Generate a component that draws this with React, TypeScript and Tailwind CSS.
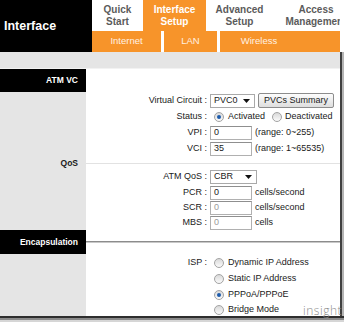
import React from "react";

const Radio = ({ on }: { on?: boolean }) => (
  <span className="flex h-[10px] w-[10px] shrink-0 items-center justify-center rounded-full border border-[#a3a3a3] bg-linear-to-b from-[#d9d9d9] to-[#fbfbfb]">
    {on && <span className="h-[4px] w-[4px] rounded-full bg-[#1d5bab]" />}
  </span>
);

const Arrow = () => (
  <svg width="7" height="4" viewBox="0 0 7 4">
    <path d="M0 0h7L3.5 4z" fill="#111" />
  </svg>
);

const Select = ({ value, w }: { value: string; w: string }) => (
  <div className={`flex h-[14px] items-center justify-between border border-[#a9a9a9] bg-white pl-[3px] pr-[4px] ${w}`}>
    <span>{value}</span>
    <Arrow />
  </div>
);

const Input = ({ value, dim }: { value: string; dim?: boolean }) => (
  <div className={`flex h-[14px] w-[42px] shrink-0 items-center border border-[#b0b0b0] border-t-[#8f8f8f] bg-white pl-[3px] ${dim ? "text-[#9a9a9a]" : ""}`}>
    {value}
  </div>
);

const Row = ({ label, h, children }: { label: string; h: string; children: React.ReactNode }) => (
  <div className={`grid grid-cols-[121px_1fr] items-center gap-x-[3px] ${h}`}>
    <span className="text-right">{label}</span>
    <div className="flex items-center whitespace-nowrap">{children}</div>
  </div>
);

const Tab = ({ top, bottom, w, active }: { top: string; bottom: string; w: string; active?: boolean }) => (
  <div
    className={`flex shrink-0 flex-col items-center justify-center whitespace-nowrap text-[10px] font-bold leading-[12px] ${w} ${
      active ? "bg-[#f7942a] text-white" : "bg-white text-[#5b5b5b]"
    }`}
  >
    <span>{top}</span>
    <span>{bottom}</span>
  </div>
);

const Choice = ({ on, label }: { on?: boolean; label: string }) => (
  <span className="ml-[4px] flex items-center gap-[4px]">
    <Radio on={on} />
    <span>{label}</span>
  </span>
);

export default function App() {
  return (
    <div className="relative flex h-[322px] w-[344px] flex-col overflow-hidden bg-white font-['Liberation_Sans',Arial,sans-serif] text-[9px] text-[#1a1a1a]">
      {/* header */}
      <div className="flex h-[52px] w-[340px] shrink-0">
        <div className="flex w-[92px] items-center bg-black pl-[4px] text-[12.5px] font-bold text-white">Interface</div>
        <div className="flex w-[248px] flex-col overflow-hidden">
          <div className="flex h-[31px]">
            <Tab top="Quick" bottom="Start" w="w-[51px]" />
            <Tab top="Interface" bottom="Setup" w="w-[63px]" active />
            <Tab top="Advanced" bottom="Setup" w="w-[67px]" />
            <Tab top="Access" bottom="Management" w="w-[86px]" />
          </div>
          <div className="flex h-[21px] items-stretch bg-[#f7942a] text-[9.5px] text-[#fff1e2]">
            <span className="flex w-[69px] items-center justify-center">Internet</span>
            <span className="w-[3px] bg-white" />
            <span className="flex w-[53px] items-center justify-center">LAN</span>
            <span className="w-[3px] bg-white" />
            <span className="flex w-[78px] items-center justify-center">Wireless</span>
          </div>
        </div>
      </div>

      {/* body */}
      <div className="flex h-[264px] shrink-0">
        <div className="flex w-[340px] flex-col overflow-hidden">
          <div className="h-[17px] shrink-0 border-b border-[#f2f2f2] bg-[#e5e5e5]" />

          <div className="grid grid-cols-[86px_1fr] text-[8.5px] font-bold">
            <div className="flex h-[23px] items-center justify-end bg-black pr-[8px] text-white">ATM VC</div>
            <div />
          </div>

          <div className="grid h-[65px] shrink-0 grid-cols-[86px_1fr]">
            <div className="bg-[#e5e5e5]" />
            <div className="flex flex-col">
              <Row label="Virtual Circuit :" h="h-[17px]">
                <Select value="PVC0" w="w-[45px]" />
                <button className="ml-[3px] flex h-[15px] w-[76px] items-center justify-center rounded-[2px] border border-[#8c8c8c] bg-linear-to-b from-[#fdfdfd] to-[#dedede] text-[9px] text-[#1a1a1a]">
                  PVCs Summary
                </button>
              </Row>
              <Row label="Status :" h="h-[16px]">
                <span className="ml-[4px] flex items-center gap-[4px]">
                  <Radio on />
                  <span>Activated</span>
                </span>
                <span className="ml-[7px] flex items-center gap-[3px]">
                  <Radio />
                  <span>Deactivated</span>
                </span>
              </Row>
              <Row label="VPI :" h="h-[16px]">
                <Input value="0" />
                <span className="ml-[3px]">(range: 0~255)</span>
              </Row>
              <Row label="VCI :" h="h-[16px]">
                <Input value="35" />
                <span className="ml-[3px]">(range: 1~65535)</span>
              </Row>
            </div>
          </div>

          <div className="grid h-[12px] shrink-0 grid-cols-[86px_1fr]">
            <div className="flex items-center justify-end bg-[#e5e5e5] pr-[8px] text-[8.5px] font-bold">QoS</div>
            <div className="flex items-center">
              <div className="h-px w-full bg-[#e2e2e2]" />
            </div>
          </div>

          <div className="grid h-[61px] shrink-0 grid-cols-[86px_1fr]">
            <div className="bg-[#e5e5e5]" />
            <div className="flex flex-col">
              <Row label="ATM QoS :" h="h-[16px]">
                <Select value="CBR" w="w-[47px]" />
              </Row>
              <Row label="PCR :" h="h-[15px]">
                <Input value="0" />
                <span className="ml-[3px]">cells/second</span>
              </Row>
              <Row label="SCR :" h="h-[15px]">
                <Input value="0" dim />
                <span className="ml-[3px]">cells/second</span>
              </Row>
              <Row label="MBS :" h="h-[15px]">
                <Input value="0" dim />
                <span className="ml-[3px]">cells</span>
              </Row>
            </div>
          </div>

          <div className="grid h-[24px] shrink-0 grid-cols-[86px_1fr]">
            <div className="flex items-center justify-end bg-black pr-[8px] text-[8.5px] font-bold text-white">Encapsulation</div>
            <div className="flex items-center">
              <div className="h-[2px] w-full border-t border-b border-t-[#8c8c8c] border-b-[#c8c8c8]" />
            </div>
          </div>

          <div className="grid h-[62px] shrink-0 grid-cols-[86px_1fr] overflow-hidden">
            <div className="bg-[#e5e5e5]" />
            <div className="flex flex-col pt-[1px]">
              <Row label="ISP :" h="h-[16px] shrink-0">
                <Choice label="Dynamic IP Address" />
              </Row>
              <Row label="" h="h-[16px] shrink-0">
                <Choice label="Static IP Address" />
              </Row>
              <Row label="" h="h-[16px] shrink-0">
                <Choice on label="PPPoA/PPPoE" />
              </Row>
              <Row label="" h="h-[13px] shrink-0">
                <Choice label="Bridge Mode" />
              </Row>
            </div>
          </div>
        </div>
        <div className="flex w-[4px]">
          <div className="w-[2px] bg-[#404040]" />
          <div className="w-[2px] bg-[#b4b4b4]" />
        </div>
      </div>

      <div className="flex h-[6px] shrink-0 flex-col">
        <div className="h-[2px] bg-[#2e2e2e]" />
        <div className="h-[2px] bg-[#8a8a8a]" />
        <div className="h-[2px] bg-[#d6d6d6]" />
      </div>

      <span className="absolute bottom-[5px] right-[2px] font-['Open_Sans',sans-serif] text-[12px] font-light leading-none tracking-[0.5px] text-[#8c8c8c]">
        insight
      </span>
    </div>
  );
}
